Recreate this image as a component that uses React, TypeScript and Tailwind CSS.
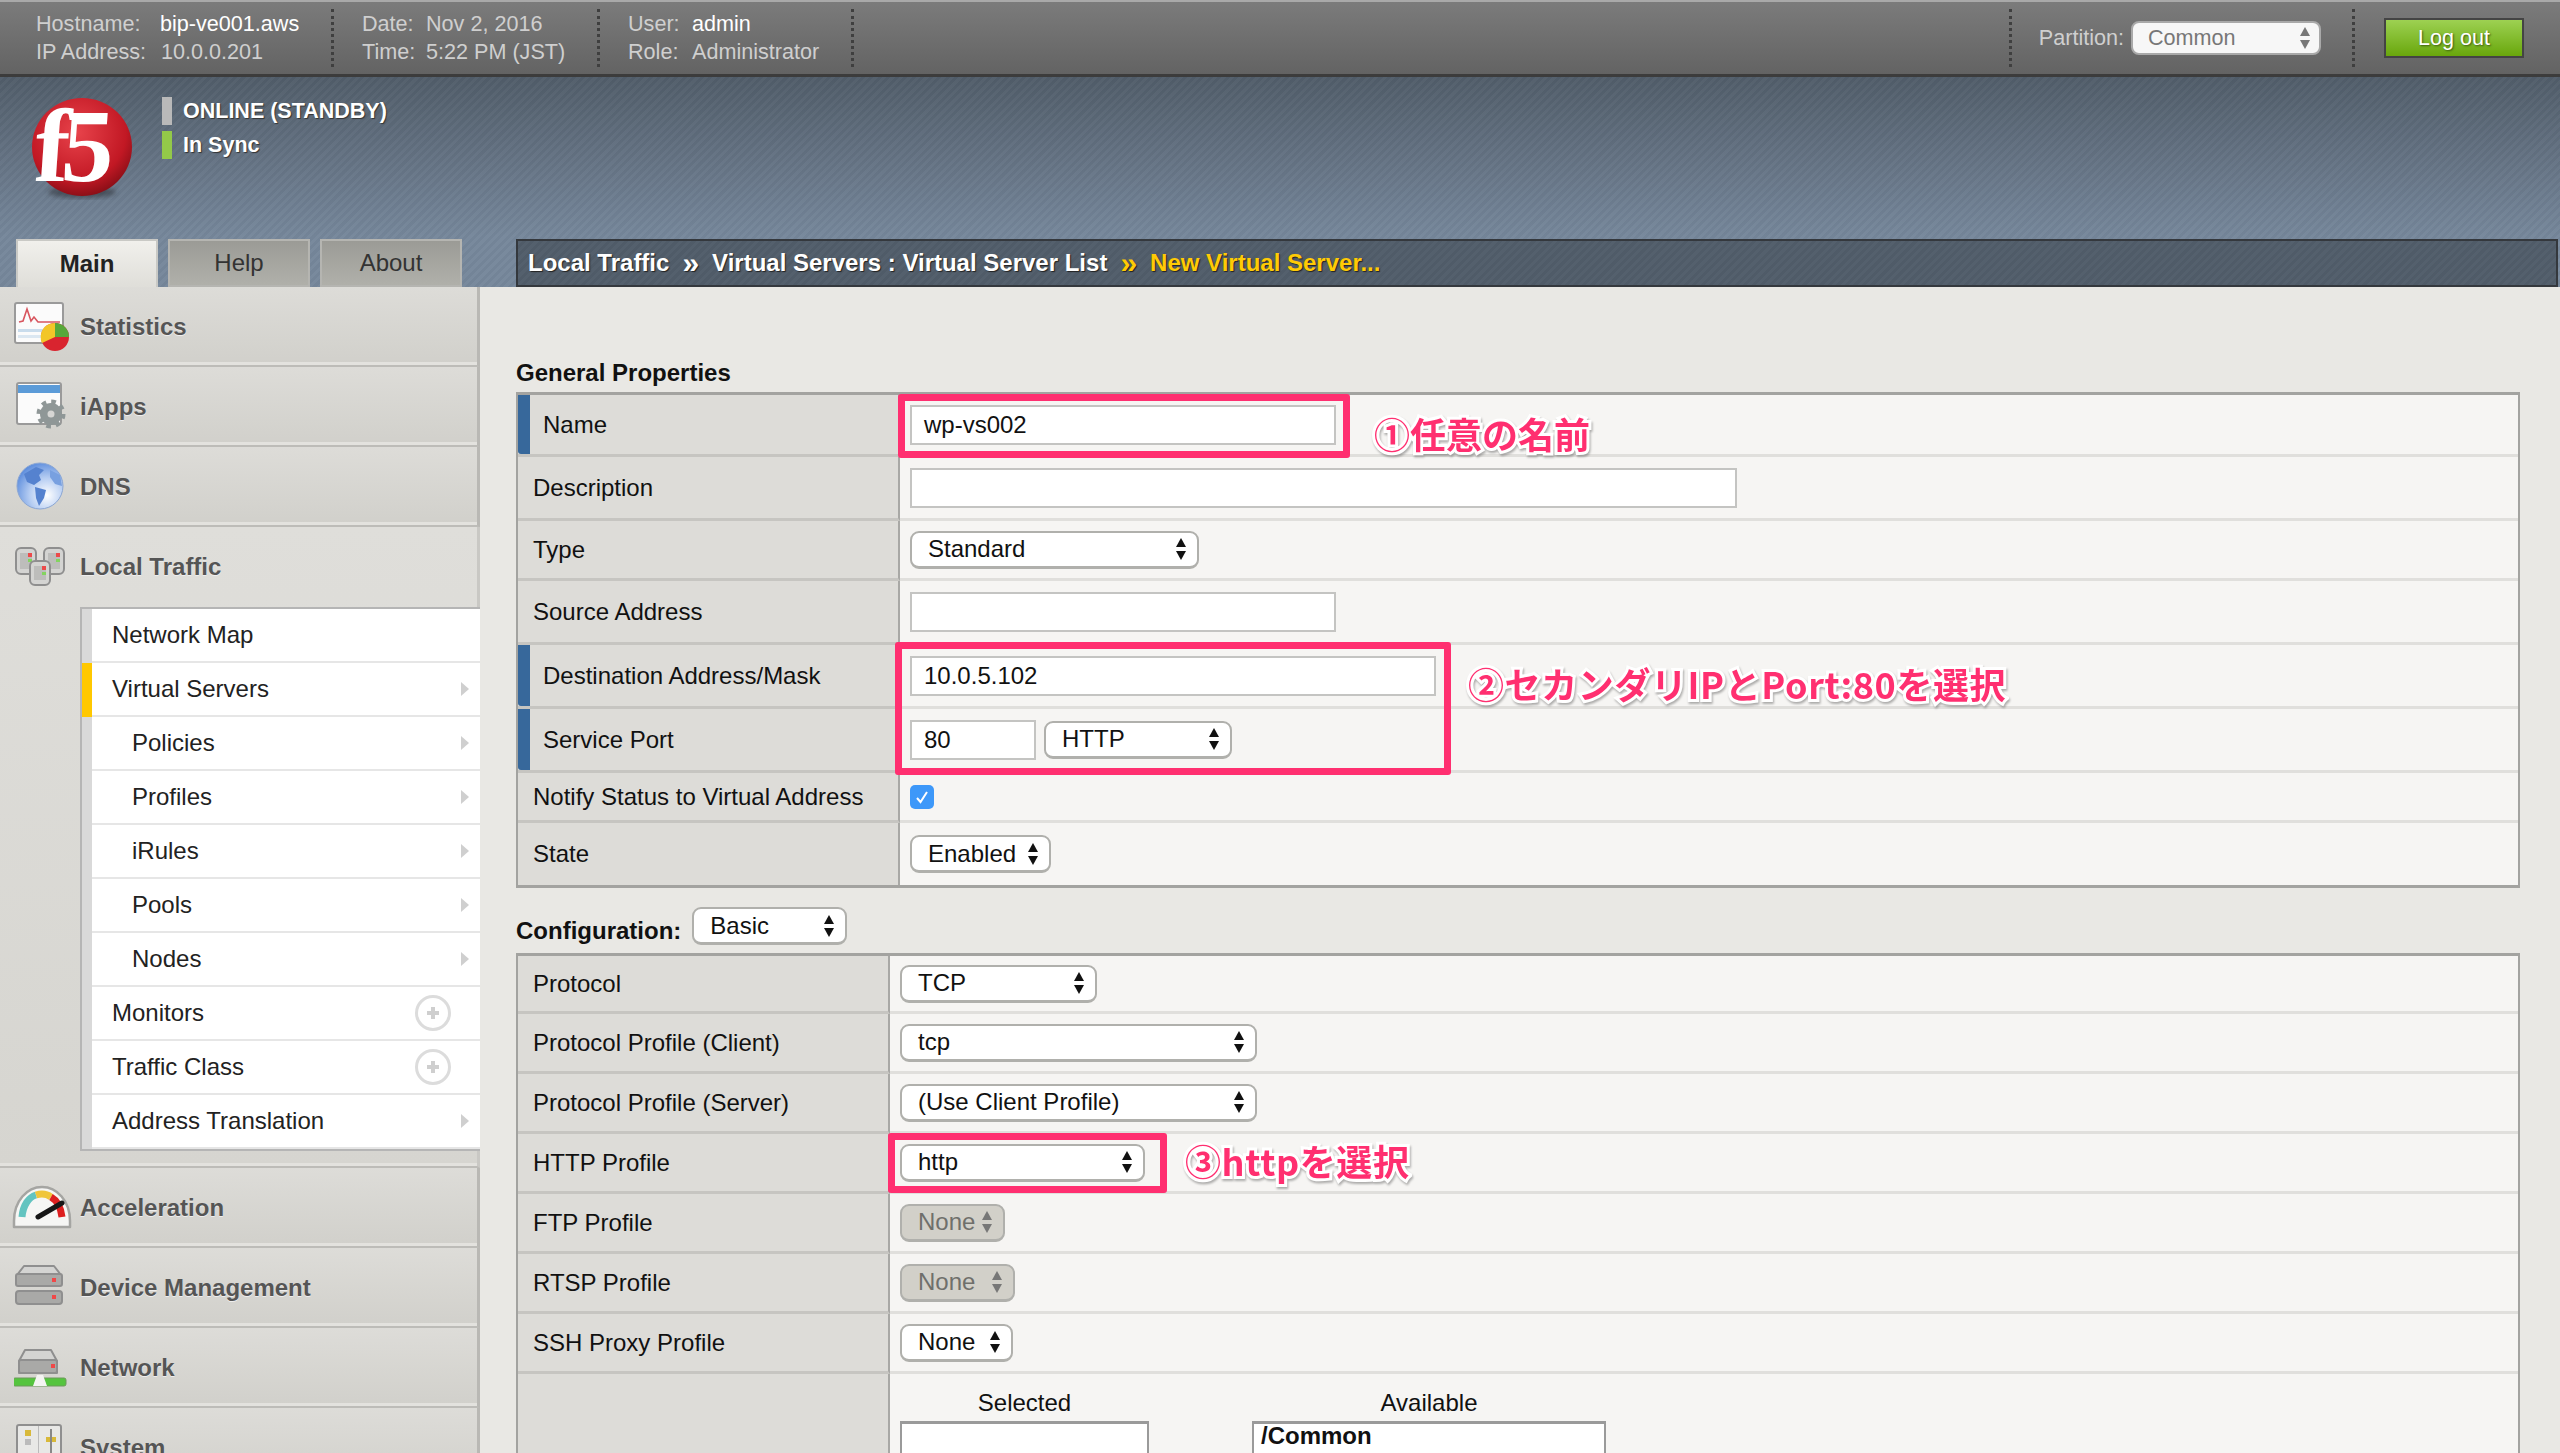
import { type ReactNode } from "react";

const Updown = ({ muted }: { muted?: boolean }) => (
  <svg width="12" height="24" viewBox="0 0 12 24" className="shrink-0">
    <path d="M6 1L11 10H1Z" fill={muted ? "#777" : "#111"} />
    <path d="M6 23L11 14H1Z" fill={muted ? "#777" : "#111"} />
  </svg>
);

const Select = ({ value, w, muted }: { value: string; w: string; muted?: boolean }) => (
  <div
    className={`flex h-[38px] items-center justify-between rounded-[9px] border-2 border-b-[3px] border-[#b0b0ac] pl-[16px] pr-[10px] ${w} ${
      muted ? "bg-[#d2d0c9] text-[#6f6f6b]" : "bg-white text-[#111]"
    }`}
  >
    <span>{value}</span>
    <Updown muted={muted} />
  </div>
);

const Input = ({ value, w }: { value?: string; w: string }) => (
  <div className={`flex h-[40px] items-center border-2 border-[#c4c4c2] bg-white pl-[12px] text-[#111] ${w}`}>{value}</div>
);

const Row = ({
  label,
  h,
  blue,
  col,
  last,
  children,
}: {
  label?: string;
  h: string;
  blue?: boolean;
  col: string;
  last?: boolean;
  children?: ReactNode;
}) => (
  <div className={`flex ${h}`}>
    <div className={`flex shrink-0 ${col} border-r-2 border-[#a8a8a5] bg-[#dddcd8] ${last ? "" : "border-b-[3px] border-b-[#c6c5c1]"}`}>
      {blue && <div className="w-[12px] shrink-0 rounded-bl-[3px] bg-[#37689b]" />}
      <div className={`flex items-center text-[#111] ${blue ? "pl-[13px]" : "pl-[15px]"}`}>{label}</div>
    </div>
    <div className={`flex flex-1 items-center bg-[#f6f5f3] pl-[10px] ${last ? "" : "border-b-[3px] border-[#e0dfdc]"}`}>{children}</div>
  </div>
);

const StatsIcon = () => (
  <svg viewBox="0 0 56 50" className="h-[50px] w-[56px]">
    <rect x="1" y="1" width="48" height="40" rx="2" fill="#fbfbfb" stroke="#9a9a9a" strokeWidth="2" />
    <path d="M5 20L9 19L13 7L17 19L20 15L24 20H46" fill="none" stroke="#d8565f" strokeWidth="1.6" />
    <rect x="4" y="27" width="42" height="3" fill="#c9dcec" />
    <rect x="4" y="33" width="30" height="3" fill="#dbe7f1" />
    <circle cx="41" cy="35" r="14" fill="#d9242f" />
    <path d="M41 35V21A14 14 0 0 1 55 35Z" fill="#57a83a" />
    <path d="M41 35V21A14 14 0 0 0 28 41Z" fill="#f2c628" />
  </svg>
);

const AppsIcon = () => (
  <svg viewBox="0 0 56 50" className="h-[50px] w-[56px]">
    <rect x="3" y="1" width="44" height="41" rx="2" fill="#fbfbfb" stroke="#9a9a9a" strokeWidth="2" />
    <rect x="4" y="3" width="42" height="8" fill="#5b9bd8" />
    <circle cx="37" cy="32" r="12" fill="none" stroke="#8f9797" strokeWidth="5" strokeDasharray="4.5 4.9" />
    <circle cx="37" cy="32" r="11" fill="#8f9797" />
    <circle cx="37" cy="32" r="3.5" fill="#d6d6d4" />
  </svg>
);

const GlobeIcon = () => (
  <svg viewBox="0 0 56 50" className="h-[50px] w-[56px]">
    <defs>
      <radialGradient id="globe" cx="65%" cy="70%" r="75%">
        <stop offset="0%" stopColor="#ffffff" />
        <stop offset="50%" stopColor="#b6cdf2" />
        <stop offset="100%" stopColor="#5a8bdc" />
      </radialGradient>
    </defs>
    <circle cx="26" cy="24" r="23" fill="url(#globe)" stroke="#8aa6d4" strokeWidth="1" />
    <path d="M10 12L22 5L30 8L25 13L27 18L20 23L13 20Z" fill="#5582cf" />
    <path d="M21 25L32 28L30 36L25 44L22 36Z" fill="#5582cf" />
    <path d="M36 8L46 13L48 24L41 22L36 15Z" fill="#78a0e0" />
  </svg>
);

const ServerBox = ({ x, y, h }: { x: number; y: number; h: number }) => (
  <g>
    <rect x={x} y={y} width="20" height={h} rx="5" fill="#d4d4d2" stroke="#8f8f8f" strokeWidth="2" />
    <rect x={x + 4} y={y + 5} width="12" height={h - 10} fill="#bdbdbb" />
    <rect x={x + 12} y={y + 5} width="4" height="4" fill="#ec4a4a" />
    <rect x={x + 12} y={y + 11} width="4" height="3" fill="#83d45f" />
  </g>
);

const TrafficIcon = () => (
  <svg viewBox="0 0 56 50" className="h-[50px] w-[56px]">
    <ServerBox x={2} y={6} h={26} />
    <ServerBox x={30} y={6} h={26} />
    <ServerBox x={16} y={19} h={24} />
  </svg>
);

const GaugeIcon = () => (
  <svg viewBox="0 0 60 46" className="h-[46px] w-[60px]">
    <path d="M2 42V36C2 16 15 2 30 2S58 16 58 36V42Z" fill="#f6f6f4" stroke="#a5a5a2" strokeWidth="2.5" strokeLinejoin="round" />
    <path d="M10 32C11 20 17 12 24 10" fill="none" stroke="#63c4c0" strokeWidth="7" />
    <path d="M24 10C30 8 35 9 39 12" fill="none" stroke="#f0c53a" strokeWidth="7" />
    <path d="M39 12C46 16 49 24 50 32" fill="none" stroke="#dd1f1f" strokeWidth="7" />
    <path d="M26 32L50 18" stroke="#161616" strokeWidth="5" strokeLinecap="round" />
  </svg>
);

const DeviceIcon = () => (
  <svg viewBox="0 0 56 50" className="h-[50px] w-[56px]">
    <path d="M3 12L10 3H40L47 12V22H3Z" fill="#d4d4d2" stroke="#8f8f8f" strokeWidth="2" strokeLinejoin="round" />
    <rect x="2" y="11" width="46" height="12" rx="2" fill="#a9a9a7" stroke="#8f8f8f" strokeWidth="2" />
    <rect x="38" y="15" width="4" height="4" fill="#f04848" />
    <rect x="2" y="28" width="46" height="13" rx="3" fill="#a9a9a7" stroke="#8f8f8f" strokeWidth="2" />
    <rect x="38" y="32" width="4" height="4" fill="#f04848" />
  </svg>
);

const NetworkIcon = () => (
  <svg viewBox="2 0 56 42" className="h-[42px] w-[56px]">
    <path d="M7 14L13 3H39L45 14V26H7Z" fill="#d4d4d2" stroke="#8f8f8f" strokeWidth="2" strokeLinejoin="round" />
    <rect x="7" y="13" width="38" height="13" rx="2" fill="#a9a9a7" stroke="#8f8f8f" strokeWidth="2" />
    <rect x="39" y="17" width="4" height="4" fill="#f04848" />
    <rect x="1" y="31" width="53" height="8" rx="2" fill="#55c43e" stroke="#6d9a5a" strokeWidth="1" />
    <path d="M21 39L25 28H31L35 39Z" fill="#f4f4f2" />
  </svg>
);

const SystemIcon = () => (
  <svg viewBox="0 0 56 50" className="h-[50px] w-[56px]">
    <rect x="3" y="2" width="44" height="44" rx="2" fill="#e8e8e6" stroke="#8f8f8f" strokeWidth="2" />
    <rect x="24" y="3" width="1" height="42" fill="#bbb" />
    <rect x="11" y="7" width="6" height="6" fill="#d8b93a" />
    <rect x="11" y="16" width="6" height="6" fill="#bbb" />
    <rect x="32" y="14" width="10" height="5" fill="#d8b93a" />
    <rect x="36" y="6" width="2" height="24" fill="#888" />
  </svg>
);

const NavItem = ({ icon, label }: { icon: ReactNode; label: string }) => (
  <div className="flex h-[80px] w-[480px] shrink-0 items-center border-r-[3px] border-b-2 border-r-[#b9b8b4] border-b-[#bdbcb8] bg-[linear-gradient(#dddcd8,#d1d0cb)] pt-[2px] text-[#555] shadow-[inset_0_-3px_0_#e3e2de]">
    <div className="flex w-[80px] shrink-0 justify-center pl-[4px]">{icon}</div>
    <span className="font-bold [text-shadow:0_1px_0_#eee]">{label}</span>
  </div>
);

const Chevron = () => (
  <svg width="10" height="16" viewBox="0 0 10 16">
    <path d="M1 1L9 8L1 15Z" fill="#cfcfcf" />
  </svg>
);

const Plus = () => (
  <div className="mr-[19px] flex h-[36px] w-[36px] items-center justify-center rounded-full border-[3px] border-[#dcdcdc]">
    <svg width="14" height="14" viewBox="0 0 14 14">
      <path d="M7 1V13M1 7H13" stroke="#cfcfcf" strokeWidth="4" />
    </svg>
  </div>
);

const SubRow = ({
  label,
  indent,
  active,
  plus,
  none,
}: {
  label: string;
  indent?: boolean;
  active?: boolean;
  plus?: boolean;
  none?: boolean;
}) => (
  <div className="flex h-[54px] shrink-0">
    <div className={`w-[10px] shrink-0 ${active ? "bg-[#ffc800]" : "bg-[#d9d9d9]"}`} />
    <div className={`flex flex-1 items-center justify-between border-b-2 border-[#e6e6e6] bg-white pr-[10px] text-[#222] ${indent ? "pl-[40px]" : "pl-[20px]"}`}>
      <span>{label}</span>
      {plus ? <Plus /> : none ? null : <Chevron />}
    </div>
  </div>
);

const Sidebar = () => (
  <aside className="flex h-full w-[480px] shrink-0 flex-col overflow-hidden">
    <NavItem icon={<StatsIcon />} label="Statistics" />
    <NavItem icon={<AppsIcon />} label="iApps" />
    <NavItem icon={<GlobeIcon />} label="DNS" />
    <div className="flex h-[641px] shrink-0 flex-col border-r-[3px] border-b-2 border-r-[#c9c8c4] border-b-[#bdbcb8] bg-[linear-gradient(#dfdeda,#d6d5d0)] shadow-[inset_0_-3px_0_#e3e2de]">
      <div className="flex h-[80px] shrink-0 items-center text-[#555]">
        <div className="flex w-[80px] shrink-0 justify-center pl-[4px]">
          <TrafficIcon />
        </div>
        <span className="font-bold [text-shadow:0_1px_0_#eee]">Local Traffic</span>
      </div>
      <div className="ml-[80px] mr-[-3px] flex flex-col border-y-2 border-l-2 border-[#b5b5b5]">
        <SubRow label="Network Map" none />
        <SubRow label="Virtual Servers" active />
        <SubRow label="Policies" indent />
        <SubRow label="Profiles" indent />
        <SubRow label="iRules" indent />
        <SubRow label="Pools" indent />
        <SubRow label="Nodes" indent />
        <SubRow label="Monitors" plus />
        <SubRow label="Traffic Class" plus />
        <SubRow label="Address Translation" />
      </div>
    </div>
    <NavItem icon={<GaugeIcon />} label="Acceleration" />
    <NavItem icon={<DeviceIcon />} label="Device Management" />
    <NavItem icon={<NetworkIcon />} label="Network" />
    <NavItem icon={<SystemIcon />} label="System" />
  </aside>
);

const Divider = ({ x }: { x: string }) => <div className={`h-[58px] border-l-[3px] border-dotted border-[#3f3f3f] ${x}`} />;

const TopBar = () => (
  <header className="flex h-[77px] shrink-0 items-center border-t-2 border-b-[3px] border-t-[#a9a9a9] border-b-[#3c3c3c] bg-[linear-gradient(#7b7b7b,#636363)] text-[21.6px] leading-[28px] text-[#cfcfcf]">
    <div className="w-[331px] shrink-0 pl-[36px]">
      <div className="flex">
        <span className="w-[124px]">Hostname:</span>
        <span className="text-white">bip-ve001.aws</span>
      </div>
      <div className="flex">
        <span className="w-[125px]">IP Address:</span>
        <span>10.0.0.201</span>
      </div>
    </div>
    <Divider x="" />
    <div className="w-[263px] shrink-0 pl-[28px]">
      <div className="flex">
        <span className="w-[64px]">Date:</span>
        <span>Nov 2, 2016</span>
      </div>
      <div className="flex">
        <span className="w-[64px]">Time:</span>
        <span>5:22 PM (JST)</span>
      </div>
    </div>
    <Divider x="" />
    <div className="w-[251px] shrink-0 pl-[28px]">
      <div className="flex">
        <span className="w-[64px]">User:</span>
        <span className="text-white">admin</span>
      </div>
      <div className="flex">
        <span className="w-[64px]">Role:</span>
        <span>Administrator</span>
      </div>
    </div>
    <Divider x="" />
    <div className="flex-1" />
    <Divider x="" />
    <span className="ml-[27px] mr-[7px]">Partition:</span>
    <div className="flex h-[34px] w-[190px] items-center justify-between rounded-[8px] border-2 border-[#a9a9a9] bg-[#f7f7f7] pl-[15px] pr-[8px] text-[#777]">
      <span>Common</span>
      <Updown muted />
    </div>
    <Divider x="ml-[31px]" />
    <div className="ml-[29px] mr-[36px] flex h-[40px] w-[140px] items-center justify-center border-2 border-[#444] bg-[linear-gradient(#9dd152,#69a70c)] text-white [text-shadow:1px_1px_2px_#3a5a10]">
      Log out
    </div>
  </header>
);

const Tab = ({ label, active }: { label: string; active?: boolean }) => (
  <div
    className={`flex h-[48px] w-[142px] items-center justify-center border-x-2 border-t-2 ${
      active
        ? "border-[#c9c9c5] bg-[linear-gradient(#f1f0ec,#dfded9)] font-bold text-[#222]"
        : "border-[#b5b5b1] bg-[linear-gradient(#9b9b96,#b0b0aa)] border-b-2 text-[#333]"
    }`}
  >
    {label}
  </div>
);

const Banner = () => (
  <div className="flex h-[210px] shrink-0 flex-col justify-between bg-[repeating-linear-gradient(135deg,rgba(255,255,255,0.025)_0px,rgba(255,255,255,0.025)_3px,rgba(0,0,0,0.025)_3px,rgba(0,0,0,0.025)_6px),linear-gradient(#515d6a_0%,#76879b_76%)]">
    <div className="flex pl-[28px] pt-[20px]">
      <svg viewBox="0 0 108 104" className="h-[104px] w-[108px] overflow-visible">
        <defs>
          <radialGradient id="ball" cx="45%" cy="35%" r="70%">
            <stop offset="0%" stopColor="#e8434b" />
            <stop offset="70%" stopColor="#c21824" />
            <stop offset="100%" stopColor="#7d0c14" />
          </radialGradient>
          <filter id="soft">
            <feGaussianBlur stdDeviation="2.5" />
          </filter>
        </defs>
        <ellipse cx="54" cy="95" rx="34" ry="6" fill="#2f3338" opacity="0.6" filter="url(#soft)" />
        <ellipse cx="54" cy="50" rx="50" ry="49" fill="url(#ball)" />
        <text x="3" y="84" fontFamily="Liberation Serif" fontWeight="700" fontSize="104" fill="#fff" letterSpacing="-8" transform="skewX(-4) translate(8 0)">
          f5
        </text>
      </svg>
      <div className="ml-[26px] flex flex-col gap-[6px] font-bold text-white [text-shadow:1px_1px_1px_#333]">
        <div className="flex h-[28px] items-center text-[21.5px]">
          <div className="mr-[11px] h-[28px] w-[10px] bg-[#b9b9b9]" />
          <span className="pt-[2px]">ONLINE (STANDBY)</span>
        </div>
        <div className="flex h-[28px] items-center text-[21.5px]">
          <div className="mr-[11px] h-[28px] w-[10px] bg-[#93c949]" />
          <span className="pt-[2px]">In Sync</span>
        </div>
      </div>
    </div>
    <div className="flex h-[48px]">
      <div className="flex w-[516px] shrink-0 gap-[10px] pl-[16px]">
        <Tab label="Main" active />
        <Tab label="Help" />
        <Tab label="About" />
      </div>
      <div className="mr-[2px] flex flex-1 items-center border-2 border-[#34383d] bg-[#515d6a] bg-[repeating-linear-gradient(135deg,rgba(255,255,255,0.02)_0px,rgba(255,255,255,0.02)_3px,rgba(0,0,0,0.02)_3px,rgba(0,0,0,0.02)_6px)] pl-[10px] font-bold text-white [text-shadow:1px_1px_1px_#222]">
        <span>Local Traffic</span>
        <span className="mx-[13px] text-[30px]">»</span>
        <span>Virtual Servers : Virtual Server List</span>
        <span className="mx-[13px] text-[30px] text-[#ffcb05]">»</span>
        <span className="text-[#ffcb05]">New Virtual Server...</span>
      </div>
    </div>
  </div>
);

const General = () => (
  <section>
    <h2 className="flex h-[30px] items-end font-bold leading-[26px] text-[#111]">General Properties</h2>
    <div className="mt-[6px] border-t-[3px] border-b-[3px] border-l-2 border-r-2 border-[#a3a3a0]">
      <Row label="Name" h="h-[62px]" blue col="w-[382px]">
        <Input value="wp-vs002" w="w-[426px]" />
      </Row>
      <Row label="Description" h="h-[64px]" col="w-[382px]">
        <Input w="w-[827px]" />
      </Row>
      <Row label="Type" h="h-[60px]" col="w-[382px]">
        <Select value="Standard" w="w-[289px]" />
      </Row>
      <Row label="Source Address" h="h-[64px]" col="w-[382px]">
        <Input w="w-[426px]" />
      </Row>
      <Row label="Destination Address/Mask" h="h-[64px]" blue col="w-[382px]">
        <Input value="10.0.5.102" w="w-[526px]" />
      </Row>
      <Row label="Service Port" h="h-[64px]" blue col="w-[382px]">
        <Input value="80" w="w-[126px]" />
        <div className="ml-[8px]">
          <Select value="HTTP" w="w-[188px]" />
        </div>
      </Row>
      <Row label="Notify Status to Virtual Address" h="h-[50px]" col="w-[382px]">
        <div className="flex h-[24px] w-[24px] items-center justify-center rounded-[5px] bg-[#3d98f9]">
          <svg width="14" height="14" viewBox="0 0 14 14">
            <path d="M2 8L5.5 12L12 2" fill="none" stroke="#fff" strokeWidth="2" />
          </svg>
        </div>
      </Row>
      <Row label="State" h="h-[62px]" col="w-[382px]" last>
        <Select value="Enabled" w="w-[141px]" />
      </Row>
    </div>
  </section>
);

const Config = () => (
  <section className="mt-[19px]">
    <div className="flex h-[37px]">
      <span className="self-end font-bold leading-[26px] text-[#111]">Configuration:</span>
      <div className="ml-[11px]">
        <Select value="Basic" w="w-[155px]" />
      </div>
    </div>
    <div className="mt-[9px] border-t-[3px] border-l-2 border-r-2 border-[#a3a3a0]">
      <Row label="Protocol" h="h-[58px]" col="w-[372px]">
        <Select value="TCP" w="w-[197px]" />
      </Row>
      <Row label="Protocol Profile (Client)" h="h-[60px]" col="w-[372px]">
        <Select value="tcp" w="w-[357px]" />
      </Row>
      <Row label="Protocol Profile (Server)" h="h-[60px]" col="w-[372px]">
        <Select value="(Use Client Profile)" w="w-[357px]" />
      </Row>
      <Row label="HTTP Profile" h="h-[60px]" col="w-[372px]">
        <Select value="http" w="w-[245px]" />
      </Row>
      <Row label="FTP Profile" h="h-[60px]" col="w-[372px]">
        <Select value="None" w="w-[105px]" muted />
      </Row>
      <Row label="RTSP Profile" h="h-[60px]" col="w-[372px]">
        <Select value="None" w="w-[115px]" muted />
      </Row>
      <Row label="SSH Proxy Profile" h="h-[60px]" col="w-[372px]">
        <Select value="None" w="w-[113px]" />
      </Row>
      <div className="flex h-[90px]">
        <div className="w-[372px] shrink-0 border-r-2 border-[#a8a8a5] bg-[#dddcd8]" />
        <div className="flex flex-1 bg-[#f6f5f3] pl-[10px] text-[#111]">
          <div className="w-[249px] text-center">
            <div className="flex h-[47px] items-end justify-center pb-[3px] leading-[30px]">Selected</div>
            <div className="h-[60px] border-x-2 border-t-[3px] border-[#9a9a9a] bg-white" />
          </div>
          <div className="ml-[103px] w-[354px] text-center">
            <div className="flex h-[47px] items-end justify-center pb-[3px] leading-[30px]">Available</div>
            <div className="h-[60px] border-x-2 border-t-[3px] border-[#9a9a9a] bg-white pl-[7px] text-left font-bold">/Common</div>
          </div>
        </div>
      </div>
    </div>
  </section>
);

const noteClass =
  "pointer-events-none absolute whitespace-nowrap font-['Noto_Sans_CJK_JP',sans-serif] text-[36px] font-bold leading-[44px] text-[#ff2f70] [paint-order:stroke_fill] [-webkit-text-stroke:6px_white] drop-shadow-[1px_2px_1px_rgba(0,0,0,0.3)]";

export default function App() {
  return (
    <div className="relative flex h-[1453px] w-full flex-col overflow-hidden bg-[#e9e8e4] font-['Liberation_Sans',Arial,sans-serif] text-[24px] leading-none">
      <TopBar />
      <Banner />
      <div className="flex min-h-0 flex-1">
        <Sidebar />
        <main className="min-w-0 flex-1 pl-[36px] pr-[40px] pt-[69px]">
          <General />
          <Config />
        </main>
      </div>

      <div className="absolute left-[898px] top-[394px] h-[64px] w-[452px] rounded-[3px] border-[7px] border-[#ff2f70]" />
      <div className="absolute left-[895px] top-[642px] h-[133px] w-[556px] rounded-[3px] border-[7px] border-[#ff2f70]" />
      <div className="absolute left-[888px] top-[1133px] h-[60px] w-[279px] rounded-[3px] border-[7px] border-[#ff2f70]" />
      <div className={`${noteClass} left-[1374px] top-[411px]`}>①任意の名前</div>
      <div className={`${noteClass} left-[1468px] top-[661px] tracking-[0.6px]`}>②セカンダリIPとPort:80を選択</div>
      <div className={`${noteClass} left-[1185px] top-[1138px] tracking-[0.6px]`}>③httpを選択</div>
    </div>
  );
}
